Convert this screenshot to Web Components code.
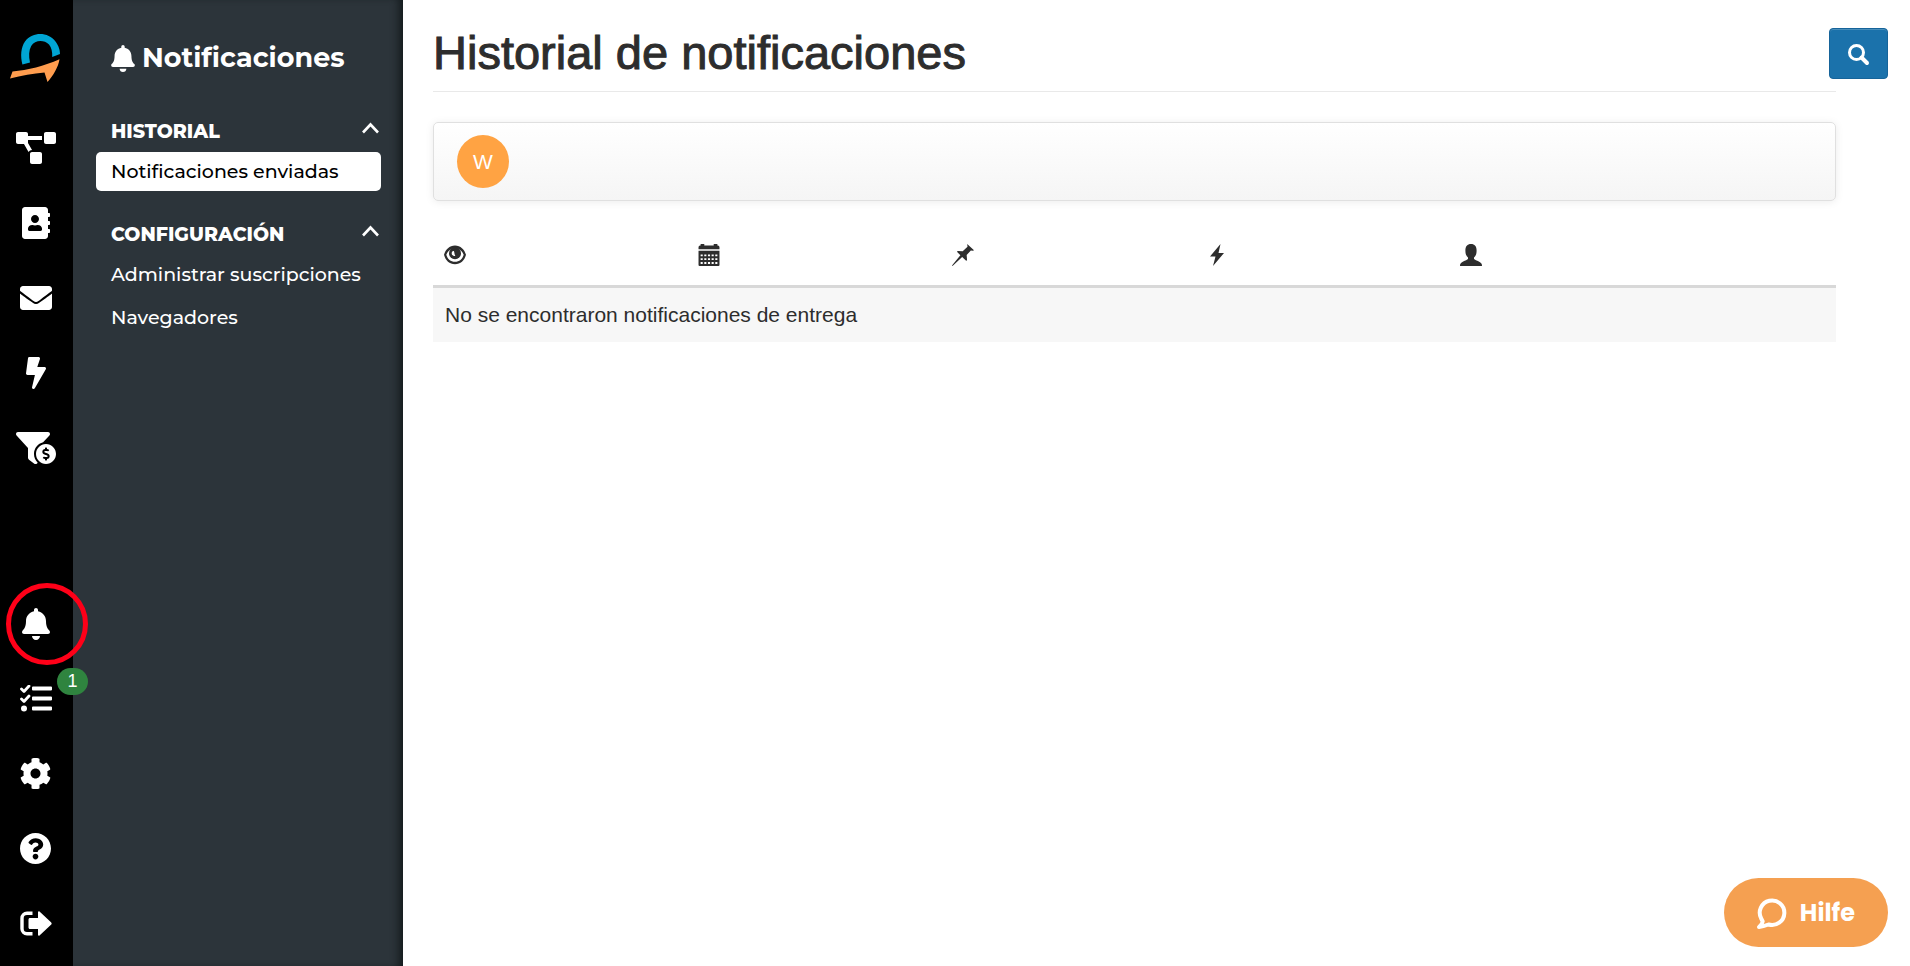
<!DOCTYPE html>
<html lang="es">
<head>
<meta charset="utf-8">
<title>Historial de notificaciones</title>
<style>
body
{
    margin: 0;
    font-family: "Liberation Sans", Arial, sans-serif;
    color: #2d2d2d;
    background: #fff;
}
</style>
</head>
<body>
<notify-app></notify-app>
<script>
// name: [viewBox, markup]
const ICONS = {
  logo: ['0 0 50 48', `<path fill="#00a5d4" d="M12.400 30.500C10.300 22 10.800 13.500 15 7.500 19 2 25 0 30 0c6 0 12 2.500 15.500 7.500 3.500 5 4.400 8.500 4.500 12.500l-7.800 3c.3-5-.7-9.500-3.200-12.500C36.700 8 33.500 7 30.500 7c-3.800 0-7.300 1.500-9.300 5-2.400 4.300-2.600 10-1.200 16.500z"/><path fill="#ff9d4f" d="M2.500 37.500C18 36.300 34 32 49.500 25.300 48.300 33 43.500 41.500 37.500 48L34.500 38.500C23 39.700 11.500 41.500 0 44.500z"/>`],
  diagram: ['0 0 640 512', `<path d="M384 320H256c-17.670 0-32 14.330-32 32v128c0 17.670 14.330 32 32 32h128c17.670 0 32-14.330 32-32V352c0-17.670-14.330-32-32-32zM192 32c0-17.670-14.330-32-32-32H32C14.330 0 0 14.330 0 32v128c0 17.670 14.330 32 32 32h95.720l73.160 128.040C211.980 300.980 232.400 288 256 288h.28L192 175.510V128h224V64H192V32zM608 0H480c-17.670 0-32 14.330-32 32v128c0 17.670 14.330 32 32 32h128c17.670 0 32-14.330 32-32V32c0-17.670-14.330-32-32-32z"/>`],
  contacts: ['0 0 448 512', `<path d="M436 160c6.600 0 12-5.400 12-12v-40c0-6.600-5.400-12-12-12h-20V48c0-26.500-21.500-48-48-48H48C21.500 0 0 21.500 0 48v416c0 26.500 21.500 48 48 48h320c26.500 0 48-21.500 48-48v-48h20c6.600 0 12-5.400 12-12v-40c0-6.600-5.400-12-12-12h-20v-64h20c6.600 0 12-5.400 12-12v-40c0-6.600-5.400-12-12-12h-20v-64h20zm-228-32c35.300 0 64 28.700 64 64s-28.700 64-64 64-64-28.700-64-64 28.700-64 64-64zm112 236.800c0 10.600-10 19.200-22.400 19.200H118.400C106 384 96 375.400 96 364.800v-19.200c0-31.800 30.100-57.600 67.200-57.600h5c12.300 5.100 25.700 8 39.800 8s27.600-2.900 39.800-8h5c37.100 0 67.200 25.800 67.200 57.600v19.200z"/>`],
  mail: ['0 64 512 384', `<path d="M502.300 190.800c3.900-3.100 9.700-.2 9.700 4.700V400c0 26.500-21.500 48-48 48H48c-26.500 0-48-21.500-48-48V195.600c0-5 5.700-7.800 9.700-4.700 22.400 17.400 52.100 39.500 154.100 113.600 21.100 15.400 56.700 47.800 92.200 47.600 35.700.3 72-32.800 92.300-47.600 102-74.100 131.600-96.300 154-113.700zM256 320c23.200.4 56.600-29.200 73.400-41.400 132.700-96.300 142.800-104.700 173.400-128.700 5.800-4.500 9.200-11.500 9.200-18.900v-19c0-26.500-21.500-48-48-48H48c-26.500 0-48 21.500-48 48v19c0 7.400 3.400 14.300 9.200 18.900 30.600 23.900 40.700 32.400 173.400 128.700 16.800 12.200 50.200 41.800 73.400 41.400z"/>`],
  bolt: ['0 0 320 512', `<path d="M296 160H180.600l42.600-129.800C227.200 15 215.700 0 200 0H56C44 0 33.800 8.900 32.200 20.800l-32 240C-1.700 275.200 9.500 288 24 288h118.700L96.600 482.500c-3.600 15.200 8 29.500 23.300 29.500 8.400 0 16.400-4.400 20.800-12l176-304c9.300-15.900-2.200-36-20.700-36z"/>`],
  funnel: ['0 0 640 512', `<path d="M433.460 165.940l101.200-111.870C554.610 34.120 540.480 0 512.260 0H31.740C3.520 0-10.600 34.120 9.340 54.070L192 256v155.920c0 12.590 5.930 24.440 16 32l79.990 60c20.860 15.640 48.470 6.970 59.220-13.570C310.800 455.380 288 406.350 288 352c0-89.790 62.050-165.170 145.460-186.060zM480 192c-88.370 0-160 71.630-160 160s71.630 160 160 160 160-71.630 160-160-71.630-160-160-160zm16 239.880V448c0 4.420-3.580 8-8 8h-16c-4.420 0-8-3.580-8-8v-16.290c-11.290-.58-22.270-4.520-31.370-11.350-3.900-2.930-4.100-8.770-.57-12.140l11.750-11.210c2.770-2.640 6.890-2.760 10.130-.73 3.870 2.420 8.260 3.720 12.820 3.720h28.110c6.500 0 11.800-5.920 11.800-13.190 0-5.950-3.610-11.190-8.770-12.730l-45-13.500c-18.590-5.580-31.580-23.420-31.580-43.390 0-24.520 19.050-44.440 42.670-45.070V256c0-4.420 3.580-8 8-8h16c4.420 0 8 3.580 8 8v16.290c11.290.58 22.270 4.510 31.370 11.350 3.900 2.930 4.100 8.770.57 12.140l-11.750 11.210c-2.770 2.640-6.890 2.760-10.130.73-3.870-2.430-8.260-3.720-12.820-3.720h-28.110c-6.500 0-11.800 5.920-11.800 13.190 0 5.950 3.610 11.190 8.770 12.730l45 13.500c18.590 5.580 31.580 23.420 31.580 43.390 0 24.530-19.040 44.440-42.670 45.070z"/>`],
  bell: ['0 0 448 512', `<path d="M224 512c35.320 0 63.970-28.650 63.970-64H160.030c0 35.350 28.650 64 63.970 64zm215.390-149.710c-19.320-20.760-55.470-51.990-55.470-154.290 0-77.700-54.480-139.900-127.940-155.160V32c0-17.670-14.320-32-31.980-32s-31.980 14.330-31.980 32v20.840C118.560 68.100 64.080 130.300 64.080 208c0 102.300-36.150 133.530-55.470 154.290-6 6.450-8.660 14.160-8.610 21.710.11 16.400 12.980 32 32.100 32h383.800c19.120 0 32-15.600 32.100-32 .05-7.550-2.610-15.270-8.610-21.710z"/>`],
  tasks: ['0 0 32 27', `<path d="M13 1.500h18a1 1 0 0 1 1 1v2a1 1 0 0 1-1 1H13a1 1 0 0 1-1-1v-2a1 1 0 0 1 1-1zM13 11.500h18a1 1 0 0 1 1 1v2a1 1 0 0 1-1 1H13a1 1 0 0 1-1-1v-2a1 1 0 0 1 1-1zM13 21.500h18a1 1 0 0 1 1 1v2a1 1 0 0 1-1 1H13a1 1 0 0 1-1-1v-2a1 1 0 0 1 1-1z"/><circle cx="4" cy="23.500" r="3"/><path d="M1.500 4l2.500 2.500 5-5.500M1.500 14l2.500 2.500 5-5.500" fill="none" stroke="currentColor" stroke-width="2.800" stroke-linecap="round" stroke-linejoin="round"/>`],
  gear: ['12 8 488 496', `<path d="M487.400 315.700l-42.600-24.600c4.300-23.200 4.300-47 0-70.200l42.600-24.600c4.900-2.800 7.100-8.600 5.500-14-11.100-35.600-30-67.800-54.700-94.600-3.800-4.100-10-5.100-14.800-2.300L380.800 110c-17.900-15.400-38.500-27.300-60.800-35.100V25.800c0-5.600-3.900-10.500-9.400-11.700-36.700-8.200-74.300-7.800-109.200 0-5.500 1.200-9.400 6.100-9.400 11.700V75c-22.200 7.900-42.800 19.800-60.800 35.100L88.700 85.500c-4.900-2.800-11-1.900-14.800 2.300-24.700 26.700-43.600 58.900-54.700 94.600-1.700 5.400.6 11.200 5.500 14L67.300 221c-4.300 23.200-4.300 47 0 70.200l-42.600 24.600c-4.900 2.800-7.100 8.600-5.500 14 11.100 35.600 30 67.800 54.700 94.600 3.800 4.100 10 5.100 14.800 2.300l42.600-24.600c17.900 15.400 38.500 27.300 60.800 35.100v49.200c0 5.600 3.900 10.500 9.400 11.700 36.700 8.200 74.300 7.800 109.200 0 5.500-1.200 9.400-6.100 9.400-11.700v-49.200c22.200-7.900 42.800-19.800 60.800-35.100l42.600 24.600c4.900 2.800 11 1.900 14.800-2.300 24.700-26.700 43.600-58.900 54.700-94.600 1.500-5.500-.7-11.300-5.600-14.100zM256 336c-44.100 0-80-35.900-80-80s35.900-80 80-80 80 35.900 80 80-35.900 80-80 80z"/>`],
  help: ['8 8 496 496', `<path d="M504 256c0 136.997-111.043 248-248 248S8 392.997 8 256C8 119.083 119.043 8 256 8s248 111.083 248 248zM262.655 90c-54.497 0-89.255 22.957-116.549 63.758-3.536 5.286-2.353 12.415 2.715 16.258l34.699 26.310c5.205 3.947 12.621 3.008 16.665-2.122 17.864-22.658 30.113-35.797 57.303-35.797 20.429 0 45.698 13.148 45.698 32.958 0 14.976-12.363 22.667-32.534 33.976C247.128 238.528 216 254.941 216 296v4c0 6.627 5.373 12 12 12h56c6.627 0 12-5.373 12-12v-1.333c0-28.462 83.186-29.647 83.186-106.667 0-58.002-60.165-102-116.531-102zM256 338c-25.365 0-46 20.635-46 46 0 25.364 20.635 46 46 46s46-20.636 46-46c0-25.365-20.635-46-46-46z"/>`],
  logout: ['0 0 32 25', `<path d="M12.500 2.200H7A5 5 0 0 0 2 7.200v10.600a5 5 0 0 0 5 5h5.500" fill="none" stroke="currentColor" stroke-width="3.400"/><path d="M19.500.6L31 11.200c.9.8.9 1.800 0 2.600L19.500 24.400c-.6.500-1.500.2-1.500-.7V18H10c-.9 0-1.500-.6-1.500-1.500v-8C8.500 7.600 9.100 7 10 7h8V1.300c0-.9.900-1.200 1.500-.7z"/>`],
  chevron: ['0 0 17 12', `<path d="M1 10.500L8.500 2.500 16 10.500" fill="none" stroke="currentColor" stroke-width="2.600"/>`],
  search: ['0 0 22 22', `<circle cx="8.500" cy="8.500" r="7" fill="none" stroke="currentColor" stroke-width="3"/><path d="M13.500 13.500l5.500 5.500" stroke="currentColor" stroke-width="4" stroke-linecap="round"/>`],
  eye: ['0 0 22 20', `<path fill-rule="evenodd" d="M11 .5C5.500.5 1.500 4.500 0 9.800 1.500 15.500 5.500 19.300 11 19.300s9.500-3.800 11-9.500C20.500 4.500 16.500.5 11 .5zM11 16.800c-4.300 0-7.400-2.600-8.700-7C3.300 7 5.700 4.500 8 3.700h6c2.300.8 4.700 3.300 5.700 6.100-1.300 4.400-4.400 7-8.700 7z"/><circle cx="11" cy="8.300" r="6"/><path fill="#fff" d="M9.300 6c1.400 0 .8 2.800 2 4.700-1.700.7-3.600-.5-3.600-2.200C7.700 7.200 8.300 6 9.300 6z"/>`],
  calendar: ['0 0 20 21', `<path fill-rule="evenodd" d="M0 5V3q0-1.500 1.500-1.500H2V0h3.500v1.500h9V0H18v1.500h.5Q20 1.500 20 3v2zM0 6.500h20V20q0 1-1 1H1q-1 0-1-1zM2 10v1.800h2V10zm3.500 0v1.800h2V10zM9 10v1.800h2V10zm3.500 0v1.800h2V10zM16 10v1.800h2V10zM2 13.500v1.800h2v-1.800zm3.500 0v1.800h2v-1.800zm3.500 0v1.800h2v-1.800zm3.500 0v1.800h2v-1.800zm3.500 0v1.800h2v-1.800zM2 17.300v1.700h2v-1.700zm3.500 0v1.700h2v-1.700zm3.500 0v1.700h2v-1.700zm3.500 0v1.700h2v-1.700zm3.500 0v1.700h2v-1.700z"/>`],
  pin: ['0 0 21 21', `<path d="M14.500 0L21 6l-1 .5-2-.3-4 4.300.4 5L13.500 16l-3.800-3.700L.5 21 0 20.500 8 10.700 4.700 7.500l.8-.9 4.700.3 4.600-4.300z"/>`],
  flash: ['0 0 14 22', `<path d="M10.500 0L0 12.500h5.500L3 22 14 9H8.500z"/>`],
  user: ['0 0 22 22', `<path d="M11 0c3.700 0 5.600 2.300 5.600 6.500 0 3.300-.8 5.500-2.600 6.900v1.500c2.500 1.700 5.500 2.600 7 4 .8.800 1 1.700 1 3.100H0c0-1.400.2-2.300 1-3.100 1.500-1.400 4.500-2.300 7-4v-1.500c-1.800-1.400-2.600-3.600-2.600-6.900C5.400 2.300 7.300 0 11 0z"/>`],
  chat: ['0 0 30 32', `<path d="M4.200 21.500A12.300 12.300 0 1 1 11.500 27.500C8.500 28.700 5.500 29.700 2 30c1.700-1.300 3.300-3.200 3.700-5.500z" fill="none" stroke="currentColor" stroke-width="4" stroke-linejoin="round"/>`]
};

class AppIcon extends HTMLElement {

  constructor() {
    super();
    this.root = this.attachShadow({ mode: 'open' });
  }

  static get observedAttributes() {
    return ['name'];
  }

  attributeChangedCallback(attrName, oldVal, newVal) {
    const [box, markup] = ICONS[newVal];
    this.root.innerHTML = `<style>:host
{
    display: inline-flex;
    flex: none;
}
svg
{
    width: 100%;
    height: 100%;
    fill: currentColor;
}</style>
    <svg viewBox="${box}" aria-hidden="true">${markup}</svg>`;
  }

}
customElements.define('app-icon', AppIcon);

class RailItem extends HTMLElement {

  constructor() {
    super();
    this.root = this.attachShadow({ mode: 'open' });
    const size = this.getAttribute('size').split('x');
    this.root.innerHTML = `<style>:host
{
    display: block;
    position: relative;
}
a
{
    display: flex;
    align-items: center;
    justify-content: center;
    height: 75px;
    padding-right: 2px;
    color: #fff;
}
app-icon
{
    width: ${size[0]}px;
    height: ${size[1]}px;
}
:host([marked])::after
{
    content: "";
    box-sizing: border-box;
    position: absolute;
    top: -3px;
    left: 6px;
    width: 82px;
    height: 82px;
    border: 5px solid #ff0018;
    border-radius: 50%;
    z-index: 5;
    pointer-events: none;
}
::slotted(*)
{
    position: absolute;
    top: 7px;
    left: 57px;
    width: 31px;
    border-radius: 14px;
    background: #2f843f;
    color: #fff;
    font-size: 18px;
    line-height: 27px;
    text-align: center;
    z-index: 5;
}</style>
    <a href="#" aria-label="${this.getAttribute('label')}">
      <app-icon name="${this.getAttribute('icon')}"></app-icon>
    </a>
    <slot></slot>`;
  }

}
customElements.define('rail-item', RailItem);

class NavRail extends HTMLElement {

  constructor() {
    super();
    this.root = this.attachShadow({ mode: 'open' });
    this.root.innerHTML = `<style>:host
{
    display: flex;
    flex-direction: column;
    width: 73px;
    flex: none;
    background: #000;
}
.brand
{
    padding: 34px 0 28px 10px;
    display: flex;
}
.brand app-icon
{
    width: 50px;
    height: 48px;
}
.bottom
{
    margin-top: auto;
    padding-bottom: 5px;
}</style>
    <a class="brand" href="#" aria-label="Inicio"><app-icon name="logo"></app-icon></a>
    <nav>
      <rail-item icon="diagram" size="40x32" label="Procesos"></rail-item>
      <rail-item icon="contacts" size="28x32" label="Contactos"></rail-item>
      <rail-item icon="mail" size="32x24" label="Correo"></rail-item>
      <rail-item icon="bolt" size="20x32" label="Automatizaciones"></rail-item>
      <rail-item icon="funnel" size="40x32" label="Ventas"></rail-item>
    </nav>
    <nav class="bottom">
      <rail-item icon="bell" size="28x32" label="Notificaciones" marked></rail-item>
      <rail-item icon="tasks" size="32x27" label="Tareas"><span>1</span></rail-item>
      <rail-item icon="gear" size="31x31" label="Ajustes"></rail-item>
      <rail-item icon="help" size="31x31" label="Ayuda"></rail-item>
      <rail-item icon="logout" size="32x25" label="Salir"></rail-item>
    </nav>`;
  }

}
customElements.define('nav-rail', NavRail);

class MenuSection extends HTMLElement {

  constructor() {
    super();
    this.root = this.attachShadow({ mode: 'open' });
    this.root.innerHTML = `<style>:host
{
    display: block;
    margin-bottom: 22px;
}
button
{
    display: flex;
    align-items: center;
    justify-content: space-between;
    width: 100%;
    height: 42px;
    padding: 0 2px 0 15px;
    border: none;
    background: transparent;
    color: inherit;
    font: inherit;
    font-size: 19px;
    font-weight: 800;
    cursor: pointer;
}
app-icon
{
    width: 17px;
    height: 12px;
    padding-bottom: 6px;
}
.items
{
    display: flex;
    flex-direction: column;
    gap: 4px;
}
::slotted(a)
{
    padding-left: 15px;
    border-radius: 5px;
    color: #fff;
    font-size: 19px;
    font-weight: 500;
    line-height: 39px;
    text-decoration: none;
}
::slotted(a.active)
{
    background: #fff;
    color: #000;
}</style>
    <button aria-expanded="true">${this.getAttribute('heading')}<app-icon name="chevron"></app-icon></button>
    <div class="items"><slot></slot></div>`;
    const button = this.root.querySelector('button');
    const items = this.root.querySelector('.items');
    button.addEventListener('click', evt => {
      items.hidden = !items.hidden;
      items.style.display = items.hidden ? 'none' : '';
      button.setAttribute('aria-expanded', !items.hidden);
    })
  }

}
customElements.define('menu-section', MenuSection);

class SideMenu extends HTMLElement {

  constructor() {
    super();
    this.root = this.attachShadow({ mode: 'open' });
    this.root.innerHTML = `<style>:host
{
    display: block;
    box-sizing: border-box;
    width: 330px;
    flex: none;
    padding: 36px 22px 0 23px;
    background: #2c343a;
    box-shadow: inset -8px 0 8px -4px #141b1d;
    color: #fff;
    font-family: Montserrat, Inter, sans-serif;
}
h2
{
    display: flex;
    align-items: center;
    gap: 7px;
    margin: 0 0 30px;
    padding-left: 15px;
    font-size: 27px;
    line-height: 44px;
    font-weight: 700;
}
h2 app-icon
{
    width: 24px;
    height: 27px;
}</style>
    <h2><app-icon name="bell"></app-icon>Notificaciones</h2>
    <menu-section heading="HISTORIAL">
      <a class="active" href="#">Notificaciones enviadas</a>
    </menu-section>
    <menu-section heading="CONFIGURACIÓN">
      <a href="#">Administrar suscripciones</a>
      <a href="#">Navegadores</a>
    </menu-section>`;
  }

}
customElements.define('side-menu', SideMenu);

class DeliveryTable extends HTMLElement {

  constructor() {
    super();
    this.root = this.attachShadow({ mode: 'open' });
    this.root.innerHTML = `<style>:host
{
    display: block;
}
table
{
    width: 100%;
    table-layout: fixed;
    border-collapse: collapse;
    font-size: 21px;
    line-height: 30px;
}
thead
{
    border-bottom: 3px solid #d8d8d8;
}
th
{
    box-sizing: border-box;
    width: 18.1%;
    padding: 19px 11px;
    text-align: left;
    line-height: 0;
}
th app-icon
{
    width: 22px;
    height: 22px;
}
.rest
{
    width: auto;
}
tbody td
{
    padding: 12px;
    background: #f7f7f7;
}</style>
    <table>
      <thead>
        <tr>
          <th aria-label="Visto"><app-icon name="eye"></app-icon></th>
          <th aria-label="Fecha"><app-icon name="calendar"></app-icon></th>
          <th aria-label="Asunto"><app-icon name="pin"></app-icon></th>
          <th aria-label="Evento"><app-icon name="flash"></app-icon></th>
          <th aria-label="Usuario"><app-icon name="user"></app-icon></th>
          <td class="rest"></td>
        </tr>
      </thead>
      <tbody>
        <tr>
          <td colspan="6"><slot></slot></td>
        </tr>
      </tbody>
    </table>`;
  }

}
customElements.define('delivery-table', DeliveryTable);

class HistoryPage extends HTMLElement {

  constructor() {
    super();
    this.root = this.attachShadow({ mode: 'open' });
    this.root.innerHTML = `<style>:host
{
    display: block;
    flex: 1;
    min-width: 0;
    padding: 26px 74px 0 30px;
}
h1
{
    margin: 0 0 30px;
    padding-bottom: 12px;
    border-bottom: 1px solid #e9e9e9;
    font-size: 47px;
    line-height: 53px;
    font-weight: 400;
    -webkit-text-stroke: 1px currentColor;
}
.filters
{
    display: flex;
    padding: 12px 23px;
    border: 1px solid #e0e0e0;
    border-radius: 5px;
    background: linear-gradient(#fff, #f5f5f5);
    box-shadow: 0 1px 8px rgba(0,0,0,.08);
    margin-bottom: 24px;
}
.avatar
{
    width: 52px;
    border: none;
    padding: 0;
    border-radius: 50%;
    background: #ffa343;
    color: #fff;
    font-family: inherit;
    font-size: 21px;
    line-height: 53px;
    cursor: pointer;
}
.search
{
    position: absolute;
    top: 28px;
    right: 22px;
    display: flex;
    align-items: center;
    justify-content: center;
    width: 59px;
    height: 51px;
    padding: 3px 0 0;
    border: 1px solid #16649a;
    border-radius: 4px;
    background: #1b72ab;
    box-shadow: inset 0 1px 0 rgba(255,255,255,.2);
    color: #fff;
    cursor: pointer;
}
.search app-icon
{
    width: 22px;
    height: 22px;
}</style>
    <h1>Historial de notificaciones</h1>
    <button class="search" aria-label="Buscar"><app-icon name="search"></app-icon></button>
    <div class="filters"><button class="avatar">W</button></div>
    <delivery-table>No se encontraron notificaciones de entrega</delivery-table>`;
  }

}
customElements.define('history-page', HistoryPage);

class HelpButton extends HTMLElement {

  constructor() {
    super();
    this.root = this.attachShadow({ mode: 'open' });
    this.root.innerHTML = `<style>:host
{
    display: block;
    position: fixed;
    right: 22px;
    bottom: 19px;
    z-index: 10;
}
button
{
    display: flex;
    align-items: center;
    gap: 13px;
    height: 69px;
    padding: 0 33px;
    border: none;
    border-radius: 35px;
    background: #f5a051;
    color: #fff;
    font-family: Poppins, Inter, sans-serif;
    font-size: 24px;
    font-weight: 700;
    cursor: pointer;
}
app-icon
{
    width: 30px;
    height: 32px;
}</style>
    <button><app-icon name="chat"></app-icon><slot></slot></button>`;
  }

}
customElements.define('help-button', HelpButton);

class NotifyApp extends HTMLElement {

  constructor() {
    super();
    this.root = this.attachShadow({ mode: 'open' });
    this.root.innerHTML = `<style>:host
{
    display: flex;
    min-height: 100vh;
}</style>
    <nav-rail></nav-rail>
    <side-menu></side-menu>
    <history-page></history-page>
    <help-button>Hilfe</help-button>`;
  }

}
customElements.define('notify-app', NotifyApp);
</script>
</body>
</html>
